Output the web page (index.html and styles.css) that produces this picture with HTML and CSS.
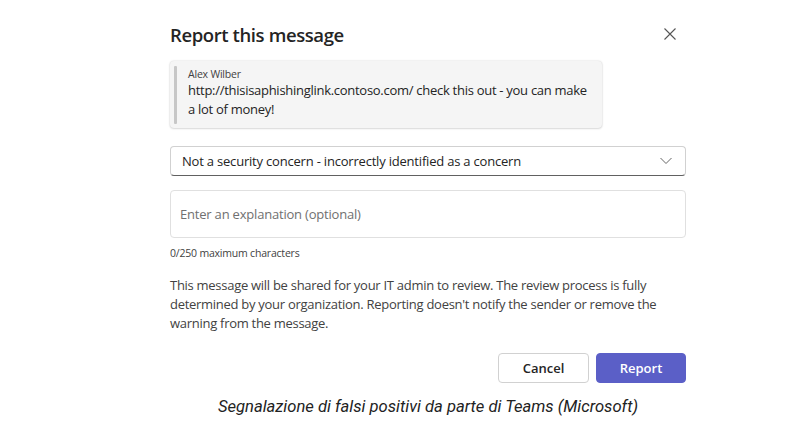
FILE: index.html
```html
<!DOCTYPE html>
<html>
<head>
<meta charset="utf-8">
<link rel="stylesheet" href="styles.css">
</head>
<body>
<div class="figure">
  <div class="dialog">
    <div class="header">
      <h1 class="title">Report this message</h1>
      <svg class="close" width="14" height="14" viewBox="0 0 14 14"><path d="M1.5 1.5 L12.5 12.5 M12.5 1.5 L1.5 12.5" stroke="#555" stroke-width="1.1" fill="none"/></svg>
    </div>
    <div class="quote">
      <div class="quote-bar"></div>
      <div class="quote-body">
        <div class="author">Alex Wilber</div>
        <div class="msg">http://thisisaphishinglink.contoso.com/ check this out - you can make a lot of money!</div>
      </div>
    </div>
    <div class="select">
      <span>Not a security concern - incorrectly identified as a concern</span>
      <svg width="14" height="8" viewBox="0 0 14 8"><path d="M1.5 1 L7 6.5 L12.5 1" stroke="#666" stroke-width="1" fill="none"/></svg>
    </div>
    <div class="textarea">Enter an explanation (optional)</div>
    <div class="counter">0/250 maximum characters</div>
    <p class="info">This message will be shared for your IT admin to review. The review process is fully determined by your organization. Reporting doesn't notify the sender or remove the warning from the message.</p>
    <div class="actions">
      <button class="btn">Cancel</button>
      <button class="btn primary">Report</button>
    </div>
  </div>
  <p class="caption">Segnalazione di falsi positivi da parte di Teams (Microsoft)</p>
</div>
</body>
</html>
```
FILE: styles.css
```css
html, body { margin: 0; padding: 0; background: #fff; }
body { font-family: "Open Sans", "Noto Sans", sans-serif; color: #242424; }
.figure { width: 516px; margin-left: 170px; padding-top: 20px; }
.dialog { display: flex; flex-direction: column; }
.header { display: flex; justify-content: space-between; align-items: center; height: 28px; }
.title { margin: 0; font-size: 18.5px; font-weight: 600; letter-spacing: -0.4px; color: #242424; }
.close { margin-right: 9px; }
.quote { margin-top: 13px; width: 432px; height: 67px; box-sizing: border-box; background: #f5f5f5; border-radius: 4px; box-shadow: 0 0 2px rgba(0,0,0,0.18), 0 1px 2px rgba(0,0,0,0.1); display: flex; padding: 5px 0 4px 4px; }
.quote-bar { width: 3px; background: #c7c7c7; border-radius: 1px; }
.quote-body { padding-left: 11px; padding-top: 1px; }
.author { font-size: 10.5px; line-height: 14px; color: #424242; letter-spacing: -0.2px; }
.msg { font-size: 13px; line-height: 19px; color: #242424; letter-spacing: -0.28px; width: 402px; }
.select { margin-top: 18px; height: 30px; box-sizing: border-box; border: 1px solid #d1d1d1; border-bottom-color: #616161; border-radius: 4px; display: flex; align-items: center; justify-content: space-between; padding: 0 12px 0 11px; font-size: 13px; letter-spacing: -0.2px; }
.textarea { margin-top: 14px; height: 48px; box-sizing: border-box; border: 1px solid #e0e0e0; border-radius: 4px; padding: 0 9px; display: flex; align-items: center; font-size: 13px; color: #707070; letter-spacing: -0.2px; }
.counter { margin-top: 8px; font-size: 10.5px; line-height: 14px; color: #424242; letter-spacing: -0.2px; }
.info { margin: 16px 0 0; font-size: 13px; line-height: 19px; color: #424242; letter-spacing: -0.28px; width: 500px; }
.actions { margin-top: 20px; display: flex; justify-content: flex-end; gap: 7px; }
.btn { width: 91px; height: 30px; box-sizing: border-box; border: 1px solid #d1d1d1; border-radius: 4px; background: #fff; font-family: inherit; font-size: 13px; font-weight: 600; color: #242424; padding: 0; }
.primary { width: 90px; background: #5b5fc7; border-color: #5b5fc7; color: #fff; }
.caption { margin: 14px 0 0 -22px; width: 560px; text-align: center; font-family: Roboto, sans-serif; font-style: italic; font-size: 16.6px; color: #222; }
```
